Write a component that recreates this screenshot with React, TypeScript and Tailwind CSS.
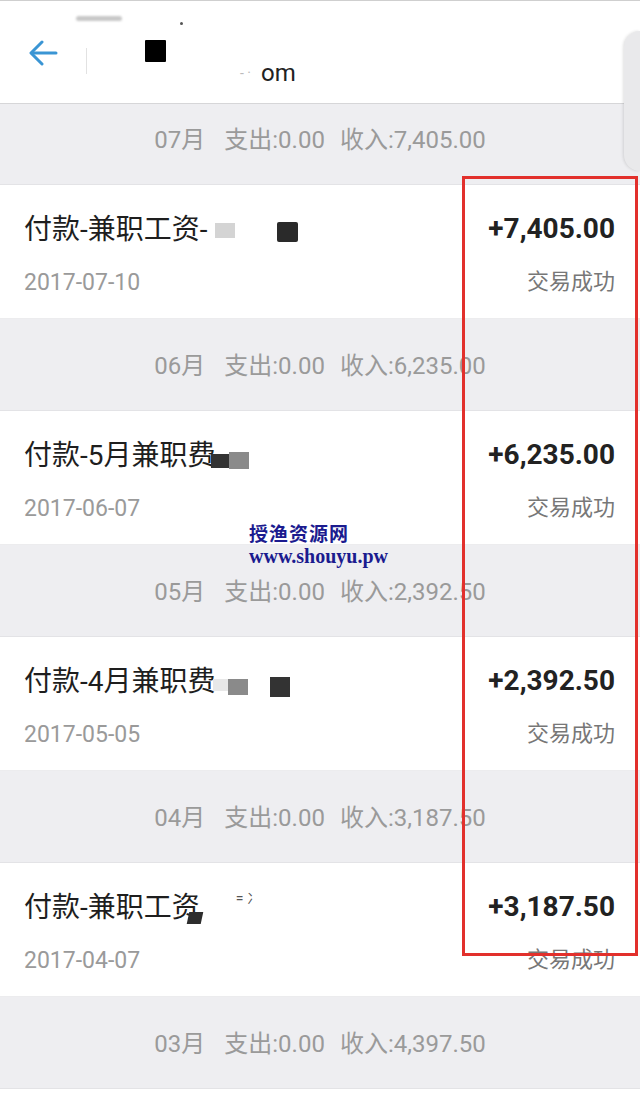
import React from "react";

type Txn = {
  month: string;
  income: string;
  date: string;
  amount: string;
  title: React.ReactNode;
};

const sans = "font-['Roboto','Noto_Sans_CJK_SC',sans-serif]";

function Block({ className }: { className: string }) {
  return <span className={`inline-block align-middle ${className}`} />;
}

const txns: Txn[] = [
  {
    month: "07月",
    income: "7,405.00",
    date: "2017-07-10",
    amount: "+7,405.00",
    title: (
      <>
        付款-兼职工资-
        <Block className="ml-[8px] w-[20px] h-[15px] bg-[#d4d4d4] -mt-[2px]" />
        <Block className="ml-[42px] w-[21px] h-[20px] bg-[#2a2a2a] rounded-[2px]" />
      </>
    ),
  },
  {
    month: "06月",
    income: "6,235.00",
    date: "2017-06-07",
    amount: "+6,235.00",
    title: (
      <>
        付款-5月兼职费
        <Block className="-ml-[4px] w-[18px] h-[14px] bg-[#333] mt-[6px]" />
        <Block className="w-[20px] h-[17px] bg-[#8a8a8a] mt-[6px]" />
      </>
    ),
  },
  {
    month: "05月",
    income: "2,392.50",
    date: "2017-05-05",
    amount: "+2,392.50",
    title: (
      <>
        付款-4月兼职费
        <Block className="-ml-[2px] w-[15px] h-[12px] bg-[#e8e8e8] mt-[2px]" />
        <Block className="w-[20px] h-[16px] bg-[#8a8a8a] mt-[6px]" />
        <Block className="ml-[22px] w-[20px] h-[20px] bg-[#333] mt-[6px]" />
      </>
    ),
  },
  {
    month: "04月",
    income: "3,187.50",
    date: "2017-04-07",
    amount: "+3,187.50",
    title: (
      <>
        付款-兼职工资
        <Block className="-ml-[12px] w-[14px] h-[12px] bg-[#2d2d2d] mt-[16px] -skew-x-12" />
        <span className="ml-[34px] text-[14px] text-[#555] align-top leading-none">
          = 冫
        </span>
      </>
    ),
  },
];

function MonthBar({
  month,
  income,
  first,
}: {
  month: string;
  income: string;
  first?: boolean;
}) {
  return (
    <div
      className={`flex items-center justify-center bg-[#eeeef1] border-b border-[#e3e3e6] text-[24px] text-[#9a9a9a] ${
        first ? "h-[81px] pb-[8px]" : "h-[92px] pt-[3px]"
      }`}
    >
      <span>{month}</span>
      <span className="ml-[19px]">支出:0.00</span>
      <span className="ml-[15px]">收入:{income}</span>
    </div>
  );
}

function Row({ t }: { t: Txn }) {
  return (
    <div className="flex justify-between bg-white h-[134px] border-b border-[#ececee] pl-[24px] pr-[25px]">
      <div className="flex flex-col pt-[28px]">
        <div className="text-[28px] leading-[34px] text-[#1e1e1e] whitespace-nowrap">
          {t.title}
        </div>
        <div className="mt-[22px] text-[23px] leading-[28px] text-[#9a9a9a]">
          {t.date}
        </div>
      </div>
      <div className="flex flex-col items-end pt-[27px]">
        <div className="text-[28px] leading-[34px] font-bold text-[#222]">
          {t.amount}
        </div>
        <div className="mt-[22px] text-[22px] leading-[28px] text-[#777]">
          交易成功
        </div>
      </div>
    </div>
  );
}

export default function App() {
  return (
    <div className={`relative w-[640px] h-[1096px] overflow-hidden bg-white ${sans}`}>
      <header className="relative h-[104px] bg-white border-t border-[#cfcfcf] border-b border-b-[#d6d6d8] flex items-start">
        <span className="absolute left-[76px] top-[15px] w-[46px] h-[5px] rounded-full bg-[#c8c8c8] blur-[1px]" />
        <svg
          className="ml-[29px] mt-[39px]"
          width="29"
          height="26"
          viewBox="0 0 29 26"
          fill="none"
          stroke="#3a95d4"
          strokeWidth="3"
          strokeLinecap="round"
          strokeLinejoin="round"
        >
          <path d="M27 13H3" />
          <path d="M13 2 2 13l11 11" />
        </svg>
        <span className="ml-[28px] mt-[47px] w-px h-[26px] bg-[#e2e2e2]" />
        <span className="ml-[58px] mt-[39px] w-[21px] h-[22px] bg-black rounded-[1px]" />
        <span className="absolute left-[180px] top-[21px] w-[3px] h-[3px] rounded-full bg-[#555]" />
        <span className="ml-[74px] mt-[57px] text-[24px] leading-[30px] text-[#222]">
          <span className="text-[#bbb] text-[14px] align-top">- ·</span>
          <span className="ml-[10px]">om</span>
        </span>
      </header>

      {txns.map((t, i) => (
        <React.Fragment key={t.date}>
          <MonthBar month={t.month} income={t.income} first={i === 0} />
          <Row t={t} />
        </React.Fragment>
      ))}
      <MonthBar month="03月" income="4,397.50" />

      <div className="absolute right-0 top-[31px] w-[16px] h-[140px] rounded-l-[16px] bg-[#e9e9eb] shadow-[-1px_0_3px_rgba(0,0,0,0.12)]" />

      <div className="absolute left-[462px] top-[176px] w-[176px] h-[780px] border-[3px] border-[#e2302c]" />

      <div className="absolute left-[249px] top-[521px] flex flex-col items-start text-[#1b1b8f] font-bold">
        <span className="text-[19px] leading-[24px] tracking-[1px] font-['Noto_Sans_CJK_SC',serif]">
          授渔资源网
        </span>
        <span className="text-[20px] leading-[22px] font-['Liberation_Serif',serif]">
          www.shouyu.pw
        </span>
      </div>
    </div>
  );
}
